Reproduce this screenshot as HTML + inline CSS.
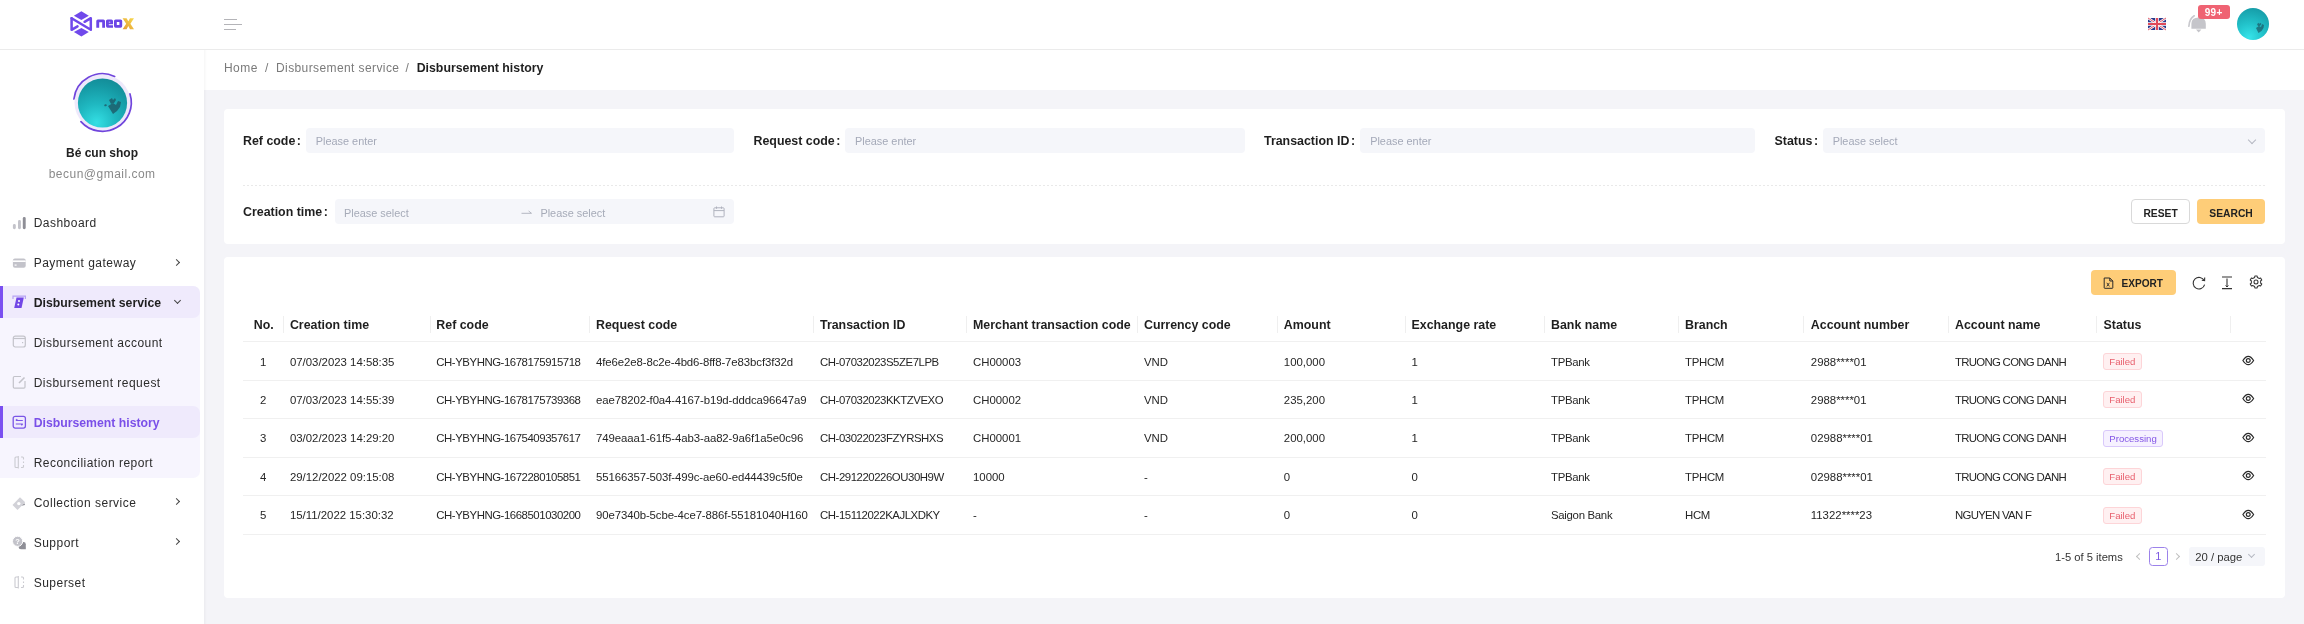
<!DOCTYPE html><html><head><meta charset="utf-8"><style>
*{box-sizing:border-box;margin:0;padding:0}
html,body{width:2304px;height:624px;overflow:hidden;background:#fff;font-family:"Liberation Sans",sans-serif;color:#262626}
.A{position:absolute;white-space:nowrap}
#hdr{position:absolute;left:0;top:0;width:2304px;height:50px;background:#fff;border-bottom:1px solid #ebebeb}
#side{position:absolute;left:0;top:50px;width:204px;height:574px;background:#fff}
#content{position:absolute;left:204px;top:50px;width:2100px;height:574px;background:#f4f4f8}
#bc{position:absolute;left:0;top:0;width:2100px;height:40px;background:#fff}
.card{position:absolute;background:#fff;border-radius:4px}
.mont{letter-spacing:0.45px}
.lbl{position:absolute;font-weight:700;font-size:12.4px;color:#1f1f1f;white-space:nowrap;line-height:16px}
.inp{position:absolute;height:25px;background:#f5f6fa;border-radius:4px;font-size:10.9px;color:#a4a9b8;line-height:27px;padding-left:10px;white-space:nowrap}
.mi{position:absolute;font-size:12px;letter-spacing:0.48px;color:#2b2b2b;line-height:16px;white-space:nowrap}
.th{position:absolute;font-weight:700;font-size:12.4px;color:#1f1f1f;white-space:nowrap;line-height:16px}
.sep{position:absolute;width:1px;height:17px;background:#efefef}
.rl{position:absolute;left:243px;width:2023px;height:1px;background:#f0f0f0}
.td{position:absolute;font-size:11.4px;color:#262626;white-space:nowrap;line-height:14px}
.tag{position:absolute;height:17px;border-radius:3px;font-size:9.6px;line-height:15px;padding:0 5.5px;white-space:nowrap}
.failed{background:#fff0f1;border:1px solid #fdd5d8;color:#e8606e}
.proc{background:#f6f1ff;border:1px solid #d9c9fb;color:#8457e6}
svg{position:absolute;overflow:visible}
</style></head><body><div id="root" style="position:absolute;left:0;top:0;width:2304px;height:624px;overflow:hidden;will-change:transform;background:#fff">
<div id="hdr"></div>
<svg style="left:66px;top:8px" width="30" height="32" viewBox="0 0 30 32">
<polygon points="15.4,3.3 22.8,7.7 15.4,11.9 7.9,7.7" fill="#7049eb"/>
<polygon points="15.4,19.9 22.8,24.1 15.4,28.5 7.9,24.1" fill="#7049eb"/>
<g stroke="#7049eb" stroke-width="2.5" fill="none" stroke-linejoin="round" stroke-linecap="round">
<path d="M5.6,10.2 L5.6,21.8 L11.5,18.3"/>
<path d="M5.6,10.2 L24.8,21.8 L24.8,10.2 L18.6,13.8"/>
</g></svg>
<svg style="left:0;top:0" width="140" height="40" viewBox="0 0 140 40">
<defs><linearGradient id="xg" x1="0" y1="1" x2="1" y2="0"><stop offset="0" stop-color="#e59a34"/><stop offset="1" stop-color="#f7da4e"/></linearGradient></defs>
<path fill-rule="evenodd" fill="#6b46e6" d="M96.3,27.7 V21.1 Q96.3,19.5 97.9,19.5 H103.4 Q105,19.5 105,21.1 V27.7 H102.2 V22.2 H99.2 V27.7 Z
M106,21.1 Q106,19.5 107.6,19.5 H111.4 Q113,19.5 113,21.1 V24.3 H108.8 V25.2 H113 V27.7 H107.6 Q106,27.7 106,26.1 Z M108.8,21.8 V22.5 H110.3 V21.8 Z
M114,21.1 Q114,19.5 115.6,19.5 H120.6 Q122.2,19.5 122.2,21.1 V26.1 Q122.2,27.7 120.6,27.7 H115.6 Q114,27.7 114,26.1 Z M116.8,22.1 V25.1 H119.4 V22.1 Z"/>
<path d="M122.6,18.2 H126.6 L128.3,21.3 L130,18.2 H134 L130.4,23.7 L134,29.3 H130 L128.3,26.1 L126.6,29.3 H122.6 L126.2,23.7 Z" fill="url(#xg)"/>
</svg>
<div class="A" style="left:224px;top:18.5px;width:13px;height:1.6px;background:#b4b4b8"></div>
<div class="A" style="left:224px;top:23.5px;width:17.5px;height:1.6px;background:#b4b4b8"></div>
<div class="A" style="left:224px;top:28.5px;width:11.5px;height:1.6px;background:#b4b4b8"></div>
<svg style="left:2148px;top:18px" width="18" height="12" viewBox="0 0 60 40">
<rect width="60" height="40" fill="#2b3a8c"/>
<path d="M0,0 L60,40 M60,0 L0,40" stroke="#fff" stroke-width="8"/>
<path d="M0,0 L60,40 M60,0 L0,40" stroke="#e04a5a" stroke-width="3"/>
<path d="M30,0 V40 M0,20 H60" stroke="#fff" stroke-width="12"/>
<path d="M30,0 V40 M0,20 H60" stroke="#e04a5a" stroke-width="7"/>
</svg>
<svg style="left:2186px;top:13px" width="22" height="22" viewBox="0 0 22 22">
<path d="M5.4,15.8 V10.8 Q5.4,4.6 12.6,4.6 Q19.8,4.6 19.8,10.8 V15.8 Z" fill="#c5c5ca"/>
<path d="M10,16.6 H15.4 L12.7,19.6 Z" fill="#c5c5ca"/>
<path d="M2.9,13.2 Q3.2,5.8 8.2,2.8" stroke="#c9c9ce" stroke-width="1.7" fill="none" stroke-linecap="round"/>
</svg>
<div class="A" style="left:2198px;top:5px;width:31.5px;height:13.5px;background:#ef6373;border-radius:3px;color:#fff;font-size:10px;font-weight:700;line-height:15px;text-align:center;letter-spacing:0.4px">99+</div>
<div class="A" style="left:2236.5px;top:7.8px;width:32px;height:32px;border-radius:50%;background:radial-gradient(circle at 38% 92%,#36e4ea 0%,#22c2ca 40%,#17a0ab 80%,#13919d 100%)"></div>
<svg style="left:2236.5px;top:10.5px" width="32" height="32" viewBox="0 0 32 32"><g fill="#1d5f6c" opacity="0.75"><path d="M19,17 l3,-2 l2,1 l1,-3 l2,1 l-0.5,3 l-2,3 l-3,2 z"/><path d="M20,13 l2,-1.2 l0.6,1.2 l1.2,-1.2 l0.6,1.2 l-1.2,1.8 l-2,0.6 z"/></g></svg>
<div id="side"></div>
<svg style="left:72px;top:72px" width="61" height="61" viewBox="0 0 61 61">
<circle cx="30.5" cy="30.5" r="28" fill="#eee9fb"/>
<defs><radialGradient id="ag" cx="0.38" cy="0.9" r="0.95"><stop offset="0" stop-color="#34dfe4"/><stop offset="0.4" stop-color="#1fb8c1"/><stop offset="0.8" stop-color="#1598a3"/><stop offset="1" stop-color="#138a96"/></radialGradient></defs>
<circle cx="30.5" cy="31" r="24.6" fill="url(#ag)"/>
<g fill="#1d5f6c" opacity="0.85">
<path d="M36,34 l5,-3 l3,2 l2,-4 l3,1 l-1,5 l-3,4 l-4,3 z"/>
<path d="M37,28 l3,-2 l1,2 l2,-2 l1,2 l-2,3 l-3,1 z"/>
<path d="M32,33 l2,-1 l1,1.5 l-2,1 z"/>
</g>
<path d="M1.91,26.99 A28.8,28.8 0 0 1 42.67,4.40" stroke="#7045dc" stroke-width="1.7" fill="none" stroke-linecap="round"/>
<path d="M57.98,21.89 A28.8,28.8 0 0 1 8.93,49.58" stroke="#7045dc" stroke-width="1.7" fill="none" stroke-linecap="round"/>
</svg>
<div class="A" style="left:66px;top:145px;font-size:12px;font-weight:700;color:#222;line-height:16px">Bé cun shop</div>
<div class="A" style="left:48.7px;top:166px;font-size:12px;letter-spacing:0.49px;color:#8a8a8a;line-height:16px">becun@gmail.com</div>
<div class="A" style="left:0;top:286px;width:200px;height:192px;background:#f7f5fe;border-radius:0 7px 7px 0"></div>
<div class="A" style="left:0;top:286px;width:200px;height:32px;background:#efeafc;border-radius:0 7px 7px 0"></div>
<div class="A" style="left:0;top:406px;width:200px;height:32px;background:#efeafc;border-radius:0 7px 7px 0"></div>
<div class="A" style="left:0;top:286px;width:3px;height:32px;background:#7a4ff0"></div>
<div class="A" style="left:0;top:406px;width:3px;height:32px;background:#7a4ff0"></div>
<div class="mi" style="left:33.7px;top:214.9px">Dashboard</div>
<div class="mi" style="left:33.7px;top:255.1px">Payment gateway</div>
<div class="A" style="left:173.5px;top:259.9px;width:5px;height:5px;border-right:1.2px solid #444;border-bottom:1.2px solid #444;transform:rotate(-45deg)"></div>
<div class="A" style="left:33.7px;top:294.6px;font-size:12.25px;font-weight:700;color:#1f1f1f;line-height:16px">Disbursement service</div>
<div class="A" style="left:175px;top:298.4px;width:5px;height:5px;border-right:1.2px solid #444;border-bottom:1.2px solid #444;transform:rotate(45deg)"></div>
<div class="mi" style="left:33.7px;top:334.8px">Disbursement account</div>
<div class="mi" style="left:33.7px;top:374.6px">Disbursement request</div>
<div class="A" style="left:33.7px;top:414.6px;font-size:12.25px;font-weight:700;color:#7a4fe8;line-height:16px">Disbursement history</div>
<div class="mi" style="left:33.7px;top:454.90000000000003px">Reconciliation report</div>
<div class="mi" style="left:33.7px;top:494.6px">Collection service</div>
<div class="A" style="left:173.5px;top:499.4px;width:5px;height:5px;border-right:1.2px solid #444;border-bottom:1.2px solid #444;transform:rotate(-45deg)"></div>
<div class="mi" style="left:33.7px;top:534.6px">Support</div>
<div class="A" style="left:173.5px;top:539.4px;width:5px;height:5px;border-right:1.2px solid #444;border-bottom:1.2px solid #444;transform:rotate(-45deg)"></div>
<div class="mi" style="left:33.7px;top:574.6px">Superset</div>
<svg style="left:12px;top:216px" width="15" height="14" viewBox="0 0 15 14">
<rect x="0.9" y="8" width="2.9" height="5.2" rx="1.4" fill="#c3c3ca"/><rect x="6" y="4" width="2.9" height="9.2" rx="1.4" fill="#c3c3ca"/><rect x="10.8" y="1" width="2.9" height="12.2" rx="1.4" fill="#8e8e96"/></svg>
<svg style="left:12px;top:258px" width="15" height="11" viewBox="0 0 15 11">
<rect x="0.9" y="0.6" width="12.8" height="9.2" rx="2" fill="#c3c3ca"/><rect x="0.9" y="2.4" width="12.8" height="1.6" fill="#fff"/><rect x="2.6" y="6.5" width="2" height="1.2" fill="#fff"/></svg>
<svg style="left:12px;top:295px" width="15" height="15" viewBox="0 0 15 15">
<path d="M1,4 V1.2 H13.4 V4" stroke="#b7a3f3" stroke-width="1.2" fill="none"/>
<path d="M4.5,2.5 L11.8,2.5 L9.5,13 L2.2,13 Z" fill="#7247e6"/>
<circle cx="7" cy="6" r="1" fill="#fff"/><circle cx="6.3" cy="9.5" r="1" fill="#fff"/></svg>
<svg style="left:12px;top:335px" width="15" height="14" viewBox="0 0 15 14">
<rect x="1.3" y="1.2" width="12" height="10.8" rx="2" stroke="#c3c3ca" stroke-width="1.2" fill="none"/><path d="M1.3,3.5 H13.3" stroke="#c3c3ca" stroke-width="1.2"/><rect x="10" y="7" width="1.2" height="1.2" fill="#c3c3ca"/></svg>
<svg style="left:12px;top:375px" width="15" height="15" viewBox="0 0 15 15">
<path d="M9,1.5 H2.5 Q1.3,1.5 1.3,2.7 V12 Q1.3,13.2 2.5,13.2 H11.8 Q13,13.2 13,12 V6" stroke="#c3c3ca" stroke-width="1.2" fill="none"/><path d="M7,8 L12.5,2.5" stroke="#c3c3ca" stroke-width="1.6"/></svg>
<svg style="left:12px;top:415px" width="15" height="15" viewBox="0 0 15 15">
<rect x="1.2" y="1.3" width="12.2" height="11.8" rx="2" stroke="#7a55e6" stroke-width="1.3" fill="none"/><path d="M3.8,5.5 H10.8 M3.8,5.5 L5.3,4.2 M10.8,9 H3.8 M10.8,9 L9.3,10.3" stroke="#7a55e6" stroke-width="1.2" fill="none"/></svg>
<svg style="left:12px;top:455px" width="15" height="15" viewBox="0 0 15 15">
<path d="M6.3,2 H4 Q3,2 3,3 V11.5 Q3,12.5 4,12.5 H6.3 M6.3,1 V13.5" stroke="#cbcbd1" stroke-width="1.1" fill="none"/><path d="M9,2 H10.5 Q11.5,2 11.5,3 V4.5 M11.5,6.5 V8 M11.5,10 V11.5 Q11.5,12.5 10.5,12.5 H9" stroke="#cbcbd1" stroke-width="1.1" fill="none"/></svg>
<svg style="left:11px;top:494px" width="16" height="16" viewBox="0 0 16 16">
<path d="M1.5,11 L9,3.3 L14.2,8.3 L6.5,16 Z" fill="#d2d2d8"/><circle cx="7.8" cy="9.6" r="1.7" fill="#fff"/><path d="M10.5,11.8 L13.5,9.2 L14,11 Z" fill="#8e8e96"/></svg>
<svg style="left:12px;top:535px" width="15" height="15" viewBox="0 0 15 15">
<path d="M9,7 H11.5 Q13.8,7 13.8,9.3 V14.3 H9 Q6.6,14.3 6.6,11.9 V9.4 Q6.6,7 9,7 Z" fill="#8e8e96"/><circle cx="5.6" cy="6.3" r="5.1" fill="#c3c3ca" stroke="#fff" stroke-width="1"/><text x="5.6" y="8.9" font-size="7.5" text-anchor="middle" fill="#fff" font-family="Liberation Sans" font-weight="700">?</text></svg>
<svg style="left:12px;top:575px" width="15" height="15" viewBox="0 0 15 15">
<path d="M6.3,2 H4 Q3,2 3,3 V11.5 Q3,12.5 4,12.5 H6.3 M6.3,1 V13.5" stroke="#cbcbd1" stroke-width="1.1" fill="none"/><path d="M9,2 H10.5 Q11.5,2 11.5,3 V4.5 M11.5,6.5 V8 M11.5,10 V11.5 Q11.5,12.5 10.5,12.5 H9" stroke="#cbcbd1" stroke-width="1.1" fill="none"/></svg>
<div id="content"><div id="bc"></div></div>
<div class="A" style="left:204px;top:50px;width:3px;height:574px;background:linear-gradient(90deg,rgba(0,0,0,0.035),rgba(0,0,0,0))"></div>
<div class="A mont" style="left:224px;top:59.5px;font-size:12px;color:#7a7a7a;line-height:16px">Home</div>
<div class="A" style="left:265px;top:59.5px;font-size:12px;color:#7a7a7a;line-height:16px">/</div>
<div class="A mont" style="left:276px;top:59.5px;font-size:12px;color:#7a7a7a;line-height:16px;letter-spacing:0.4px">Disbursement service</div>
<div class="A" style="left:405.5px;top:59.5px;font-size:12px;color:#7a7a7a;line-height:16px">/</div>
<div class="A" style="left:416.7px;top:59.5px;font-size:12.34px;font-weight:700;color:#1f1f1f;line-height:16px">Disbursement history</div>
<div class="card" style="left:224px;top:109px;width:2061px;height:135px"></div>
<div class="lbl" style="left:243px;top:132.5px">Ref code<span style="margin-left:1.5px">:</span></div>
<div class="inp" style="left:305.8px;top:128.2px;width:428.49999999999994px">Please enter</div>
<div class="lbl" style="left:753.5px;top:132.5px">Request code<span style="margin-left:1.5px">:</span></div>
<div class="inp" style="left:845px;top:128.2px;width:399.70000000000005px">Please enter</div>
<div class="lbl" style="left:1264px;top:132.5px">Transaction ID<span style="margin-left:1.5px">:</span></div>
<div class="inp" style="left:1360.2px;top:128.2px;width:394.5px">Please enter</div>
<div class="lbl" style="left:1774.5px;top:132.5px">Status<span style="margin-left:1.5px">:</span></div>
<div class="inp" style="left:1822.7px;top:128.2px;width:442.29999999999995px">Please select</div>
<div class="A" style="left:2248.5px;top:136.5px;width:6px;height:6px;border-right:1px solid #b5b8c2;border-bottom:1px solid #b5b8c2;transform:rotate(45deg)"></div>
<div class="A" style="left:243px;top:185px;width:2022px;height:1px;background:repeating-linear-gradient(90deg,#e9e9e9 0 2px,transparent 2px 4px)"></div>
<div class="lbl" style="left:243px;top:204px">Creation time<span style="margin-left:1.5px">:</span></div>
<div class="inp" style="left:334.6px;top:199.3px;width:399.7px"></div>
<div class="A" style="left:344px;top:205.5px;font-size:10.9px;color:#a6abb8;line-height:14px">Please select</div>
<div class="A" style="left:540.4px;top:205.5px;font-size:10.9px;color:#a6abb8;line-height:14px">Please select</div>
<svg style="left:520px;top:208px" width="13" height="8" viewBox="0 0 13 8"><path d="M1.5,5.3 H11.5 L8.6,3" stroke="#b5b8c2" stroke-width="1" fill="none"/></svg>
<svg style="left:713px;top:206px" width="12" height="12" viewBox="0 0 12 12">
<rect x="0.9" y="1.8" width="10.2" height="9" rx="0.8" stroke="#b0b3be" stroke-width="1" fill="none"/><path d="M0.9,4.6 H11.1 M3.5,0.5 V2.8 M8.5,0.5 V2.8" stroke="#b0b3be" stroke-width="1"/></svg>
<div class="A" style="left:2131.2px;top:199.4px;width:58.8px;height:25px;border:1px solid #d9d9d9;border-radius:4px;background:#fff;font-size:10.3px;font-weight:700;color:#222;text-align:center;line-height:27px">RESET</div>
<div class="A" style="left:2196.8px;top:199.4px;width:68.5px;height:25px;border-radius:4px;background:#fecd78;font-size:10.3px;font-weight:700;color:#222;text-align:center;line-height:29px">SEARCH</div>
<div class="card" style="left:224px;top:257px;width:2061px;height:341px"></div>
<div class="A" style="left:2090.6px;top:269.8px;width:85.2px;height:25px;border-radius:4px;background:#fecd78"></div>
<svg style="left:2103px;top:276.5px" width="11" height="12" viewBox="0 0 11 12">
<path d="M1.2,1 H6.8 L9.8,4 V10.8 Q9.8,11.3 9.3,11.3 H1.7 Q1.2,11.3 1.2,10.8 Z M6.8,1 V4 H9.8" stroke="#2a2a2a" stroke-width="1" fill="none"/><path d="M3.8,5.8 L6.4,9.4 M6.4,5.8 L3.8,9.4" stroke="#2a2a2a" stroke-width="0.9"/></svg>
<div class="A" style="left:2121.5px;top:277.3px;font-size:10.1px;font-weight:700;color:#222;line-height:13px">EXPORT</div>
<svg style="left:2191.5px;top:275.5px" width="14" height="14" viewBox="0 0 14 14">
<path d="M12.2,4.6 A5.8,5.8 0 1 0 12.6,8.6" stroke="#333" stroke-width="1.1" fill="none"/><path d="M9.8,4.3 L12.6,4.6 L12.7,1.6" stroke="#333" stroke-width="1.1" fill="none"/></svg>
<svg style="left:2221px;top:275.5px" width="12" height="14" viewBox="0 0 12 14">
<path d="M1,1 H11 M1,12.6 H11 M6,2.5 V11" stroke="#333" stroke-width="1.1"/><path d="M4.6,9.5 L6,11 L7.4,9.5" stroke="#333" stroke-width="1" fill="none"/></svg>
<svg style="left:2248.8px;top:275.3px" width="14" height="14" viewBox="0 0 14 14">
<path d="M4.65,2.93 L5.63,2.51 L5.84,1.01 L8.16,1.01 L8.37,2.51 L9.35,2.93 L10.21,3.56 L11.60,3.00 L12.77,5.01 L11.58,5.94 L11.70,7.00 L11.58,8.06 L12.77,8.99 L11.60,11.00 L10.21,10.44 L9.35,11.07 L8.37,11.49 L8.16,12.99 L5.84,12.99 L5.63,11.49 L4.65,11.07 L3.79,10.44 L2.40,11.00 L1.23,8.99 L2.42,8.06 L2.30,7.00 L2.42,5.94 L1.23,5.01 L2.40,3.00 L3.79,3.56 Z" stroke="#333" stroke-width="1.05" fill="none" stroke-linejoin="round"/><circle cx="7" cy="7" r="2" stroke="#333" stroke-width="1.05" fill="none"/></svg>
<div class="th" style="left:253.7px;top:316.7px">No.</div>
<div class="th" style="left:289.9px;top:316.7px">Creation time</div>
<div class="sep" style="left:282.5px;top:315.5px"></div>
<div class="th" style="left:436.3px;top:316.7px">Ref code</div>
<div class="sep" style="left:430px;top:315.5px"></div>
<div class="th" style="left:596px;top:316.7px">Request code</div>
<div class="sep" style="left:589.2px;top:315.5px"></div>
<div class="th" style="left:820px;top:316.7px">Transaction ID</div>
<div class="sep" style="left:813px;top:315.5px"></div>
<div class="th" style="left:973px;top:316.7px">Merchant transaction code</div>
<div class="sep" style="left:966px;top:315.5px"></div>
<div class="th" style="left:1144px;top:316.7px">Currency code</div>
<div class="sep" style="left:1137.3px;top:315.5px"></div>
<div class="th" style="left:1283.8px;top:316.7px">Amount</div>
<div class="sep" style="left:1277px;top:315.5px"></div>
<div class="th" style="left:1411.5px;top:316.7px">Exchange rate</div>
<div class="sep" style="left:1404.6px;top:315.5px"></div>
<div class="th" style="left:1551px;top:316.7px">Bank name</div>
<div class="sep" style="left:1544px;top:315.5px"></div>
<div class="th" style="left:1685px;top:316.7px">Branch</div>
<div class="sep" style="left:1677.7px;top:315.5px"></div>
<div class="th" style="left:1810.8px;top:316.7px">Account number</div>
<div class="sep" style="left:1803px;top:315.5px"></div>
<div class="th" style="left:1955px;top:316.7px">Account name</div>
<div class="sep" style="left:1948px;top:315.5px"></div>
<div class="th" style="left:2103.5px;top:316.7px">Status</div>
<div class="sep" style="left:2096.4px;top:315.5px"></div>
<div class="sep" style="left:2230px;top:315.5px"></div>
<div class="rl" style="top:341px"></div>
<div class="td" style="left:253.7px;top:354.5px;width:19px;text-align:center">1</div>
<div class="td" style="left:289.9px;top:354.5px">07/03/2023 14:58:35</div>
<div class="td" style="left:436.3px;top:354.5px;letter-spacing:-0.45px">CH-YBYHNG-1678175915718</div>
<div class="td" style="left:596px;top:354.5px;letter-spacing:-0.1px">4fe6e2e8-8c2e-4bd6-8ff8-7e83bcf3f32d</div>
<div class="td" style="left:820px;top:354.5px;letter-spacing:-0.45px">CH-07032023S5ZE7LPB</div>
<div class="td" style="left:973px;top:354.5px">CH00003</div>
<div class="td" style="left:1144px;top:354.5px">VND</div>
<div class="td" style="left:1283.8px;top:354.5px">100,000</div>
<div class="td" style="left:1411.5px;top:354.5px">1</div>
<div class="td" style="left:1551px;top:354.5px;letter-spacing:-0.3px">TPBank</div>
<div class="td" style="left:1685px;top:354.5px;letter-spacing:-0.3px">TPHCM</div>
<div class="td" style="left:1810.8px;top:354.5px">2988****01</div>
<div class="td" style="left:1955px;top:354.5px;letter-spacing:-0.7px">TRUONG CONG DANH</div>
<div class="tag failed" style="left:2102.8px;top:353.0px">Failed</div>
<svg style="left:2241.5px;top:355.0px" width="12.5" height="11" viewBox="0 0 12.5 11">
<path d="M0.9,5.5 Q6.25,-2.9 11.6,5.5 Q6.25,13.9 0.9,5.5 Z" stroke="#2a2a2a" stroke-width="1.2" fill="none"/><circle cx="6.25" cy="5.5" r="1.9" stroke="#2a2a2a" stroke-width="1.2" fill="none"/></svg>
<div class="rl" style="top:379.90000000000003px"></div>
<div class="td" style="left:253.7px;top:392.9px;width:19px;text-align:center">2</div>
<div class="td" style="left:289.9px;top:392.9px">07/03/2023 14:55:39</div>
<div class="td" style="left:436.3px;top:392.9px;letter-spacing:-0.45px">CH-YBYHNG-1678175739368</div>
<div class="td" style="left:596px;top:392.9px;letter-spacing:-0.1px">eae78202-f0a4-4167-b19d-dddca96647a9</div>
<div class="td" style="left:820px;top:392.9px;letter-spacing:-0.45px">CH-07032023KKTZVEXO</div>
<div class="td" style="left:973px;top:392.9px">CH00002</div>
<div class="td" style="left:1144px;top:392.9px">VND</div>
<div class="td" style="left:1283.8px;top:392.9px">235,200</div>
<div class="td" style="left:1411.5px;top:392.9px">1</div>
<div class="td" style="left:1551px;top:392.9px;letter-spacing:-0.3px">TPBank</div>
<div class="td" style="left:1685px;top:392.9px;letter-spacing:-0.3px">TPHCM</div>
<div class="td" style="left:1810.8px;top:392.9px">2988****01</div>
<div class="td" style="left:1955px;top:392.9px;letter-spacing:-0.7px">TRUONG CONG DANH</div>
<div class="tag failed" style="left:2102.8px;top:391.4px">Failed</div>
<svg style="left:2241.5px;top:393.4px" width="12.5" height="11" viewBox="0 0 12.5 11">
<path d="M0.9,5.5 Q6.25,-2.9 11.6,5.5 Q6.25,13.9 0.9,5.5 Z" stroke="#2a2a2a" stroke-width="1.2" fill="none"/><circle cx="6.25" cy="5.5" r="1.9" stroke="#2a2a2a" stroke-width="1.2" fill="none"/></svg>
<div class="rl" style="top:418.3px"></div>
<div class="td" style="left:253.7px;top:431.3px;width:19px;text-align:center">3</div>
<div class="td" style="left:289.9px;top:431.3px">03/02/2023 14:29:20</div>
<div class="td" style="left:436.3px;top:431.3px;letter-spacing:-0.45px">CH-YBYHNG-1675409357617</div>
<div class="td" style="left:596px;top:431.3px;letter-spacing:-0.1px">749eaaa1-61f5-4ab3-aa82-9a6f1a5e0c96</div>
<div class="td" style="left:820px;top:431.3px;letter-spacing:-0.45px">CH-03022023FZYRSHXS</div>
<div class="td" style="left:973px;top:431.3px">CH00001</div>
<div class="td" style="left:1144px;top:431.3px">VND</div>
<div class="td" style="left:1283.8px;top:431.3px">200,000</div>
<div class="td" style="left:1411.5px;top:431.3px">1</div>
<div class="td" style="left:1551px;top:431.3px;letter-spacing:-0.3px">TPBank</div>
<div class="td" style="left:1685px;top:431.3px;letter-spacing:-0.3px">TPHCM</div>
<div class="td" style="left:1810.8px;top:431.3px">02988****01</div>
<div class="td" style="left:1955px;top:431.3px;letter-spacing:-0.7px">TRUONG CONG DANH</div>
<div class="tag proc" style="left:2102.8px;top:429.8px">Processing</div>
<svg style="left:2241.5px;top:431.8px" width="12.5" height="11" viewBox="0 0 12.5 11">
<path d="M0.9,5.5 Q6.25,-2.9 11.6,5.5 Q6.25,13.9 0.9,5.5 Z" stroke="#2a2a2a" stroke-width="1.2" fill="none"/><circle cx="6.25" cy="5.5" r="1.9" stroke="#2a2a2a" stroke-width="1.2" fill="none"/></svg>
<div class="rl" style="top:456.70000000000005px"></div>
<div class="td" style="left:253.7px;top:469.7px;width:19px;text-align:center">4</div>
<div class="td" style="left:289.9px;top:469.7px">29/12/2022 09:15:08</div>
<div class="td" style="left:436.3px;top:469.7px;letter-spacing:-0.45px">CH-YBYHNG-1672280105851</div>
<div class="td" style="left:596px;top:469.7px;letter-spacing:-0.1px">55166357-503f-499c-ae60-ed44439c5f0e</div>
<div class="td" style="left:820px;top:469.7px;letter-spacing:-0.45px">CH-291220226OU30H9W</div>
<div class="td" style="left:973px;top:469.7px">10000</div>
<div class="td" style="left:1144px;top:469.7px">-</div>
<div class="td" style="left:1283.8px;top:469.7px">0</div>
<div class="td" style="left:1411.5px;top:469.7px">0</div>
<div class="td" style="left:1551px;top:469.7px;letter-spacing:-0.3px">TPBank</div>
<div class="td" style="left:1685px;top:469.7px;letter-spacing:-0.3px">TPHCM</div>
<div class="td" style="left:1810.8px;top:469.7px">02988****01</div>
<div class="td" style="left:1955px;top:469.7px;letter-spacing:-0.7px">TRUONG CONG DANH</div>
<div class="tag failed" style="left:2102.8px;top:468.2px">Failed</div>
<svg style="left:2241.5px;top:470.2px" width="12.5" height="11" viewBox="0 0 12.5 11">
<path d="M0.9,5.5 Q6.25,-2.9 11.6,5.5 Q6.25,13.9 0.9,5.5 Z" stroke="#2a2a2a" stroke-width="1.2" fill="none"/><circle cx="6.25" cy="5.5" r="1.9" stroke="#2a2a2a" stroke-width="1.2" fill="none"/></svg>
<div class="rl" style="top:495.1px"></div>
<div class="td" style="left:253.7px;top:508.09999999999997px;width:19px;text-align:center">5</div>
<div class="td" style="left:289.9px;top:508.09999999999997px">15/11/2022 15:30:32</div>
<div class="td" style="left:436.3px;top:508.09999999999997px;letter-spacing:-0.45px">CH-YBYHNG-1668501030200</div>
<div class="td" style="left:596px;top:508.09999999999997px;letter-spacing:-0.1px">90e7340b-5cbe-4ce7-886f-55181040H160</div>
<div class="td" style="left:820px;top:508.09999999999997px;letter-spacing:-0.45px">CH-15112022KAJLXDKY</div>
<div class="td" style="left:973px;top:508.09999999999997px">-</div>
<div class="td" style="left:1144px;top:508.09999999999997px">-</div>
<div class="td" style="left:1283.8px;top:508.09999999999997px">0</div>
<div class="td" style="left:1411.5px;top:508.09999999999997px">0</div>
<div class="td" style="left:1551px;top:508.09999999999997px;letter-spacing:-0.3px">Saigon Bank</div>
<div class="td" style="left:1685px;top:508.09999999999997px;letter-spacing:-0.3px">HCM</div>
<div class="td" style="left:1810.8px;top:508.09999999999997px">11322****23</div>
<div class="td" style="left:1955px;top:508.09999999999997px;letter-spacing:-0.7px">NGUYEN VAN F</div>
<div class="tag failed" style="left:2102.8px;top:506.59999999999997px">Failed</div>
<svg style="left:2241.5px;top:508.59999999999997px" width="12.5" height="11" viewBox="0 0 12.5 11">
<path d="M0.9,5.5 Q6.25,-2.9 11.6,5.5 Q6.25,13.9 0.9,5.5 Z" stroke="#2a2a2a" stroke-width="1.2" fill="none"/><circle cx="6.25" cy="5.5" r="1.9" stroke="#2a2a2a" stroke-width="1.2" fill="none"/></svg>
<div class="rl" style="top:533.5px"></div>
<div class="A" style="left:2055px;top:550px;font-size:11.2px;color:#333;line-height:14px">1-5 of 5 items</div>
<div class="A" style="left:2137px;top:554px;width:5px;height:5px;border-left:1px solid #c0c0c0;border-bottom:1px solid #c0c0c0;transform:rotate(45deg)"></div>
<div class="A" style="left:2148.8px;top:547.4px;width:19px;height:19px;border:1px solid #9c82ea;border-radius:3.5px;font-size:11px;color:#7e5ae3;text-align:center;line-height:17px">1</div>
<div class="A" style="left:2174px;top:554px;width:5px;height:5px;border-right:1px solid #c0c0c0;border-top:1px solid #c0c0c0;transform:rotate(45deg)"></div>
<div class="A" style="left:2188.7px;top:547.4px;width:76.7px;height:19px;background:#f5f6fa;border-radius:3px"></div>
<div class="A" style="left:2195.2px;top:550px;font-size:11.3px;color:#333;line-height:14px">20 / page</div>
<div class="A" style="left:2249px;top:552px;width:5px;height:5px;border-right:1px solid #b5b8c2;border-bottom:1px solid #b5b8c2;transform:rotate(45deg)"></div>
</div></body></html>
